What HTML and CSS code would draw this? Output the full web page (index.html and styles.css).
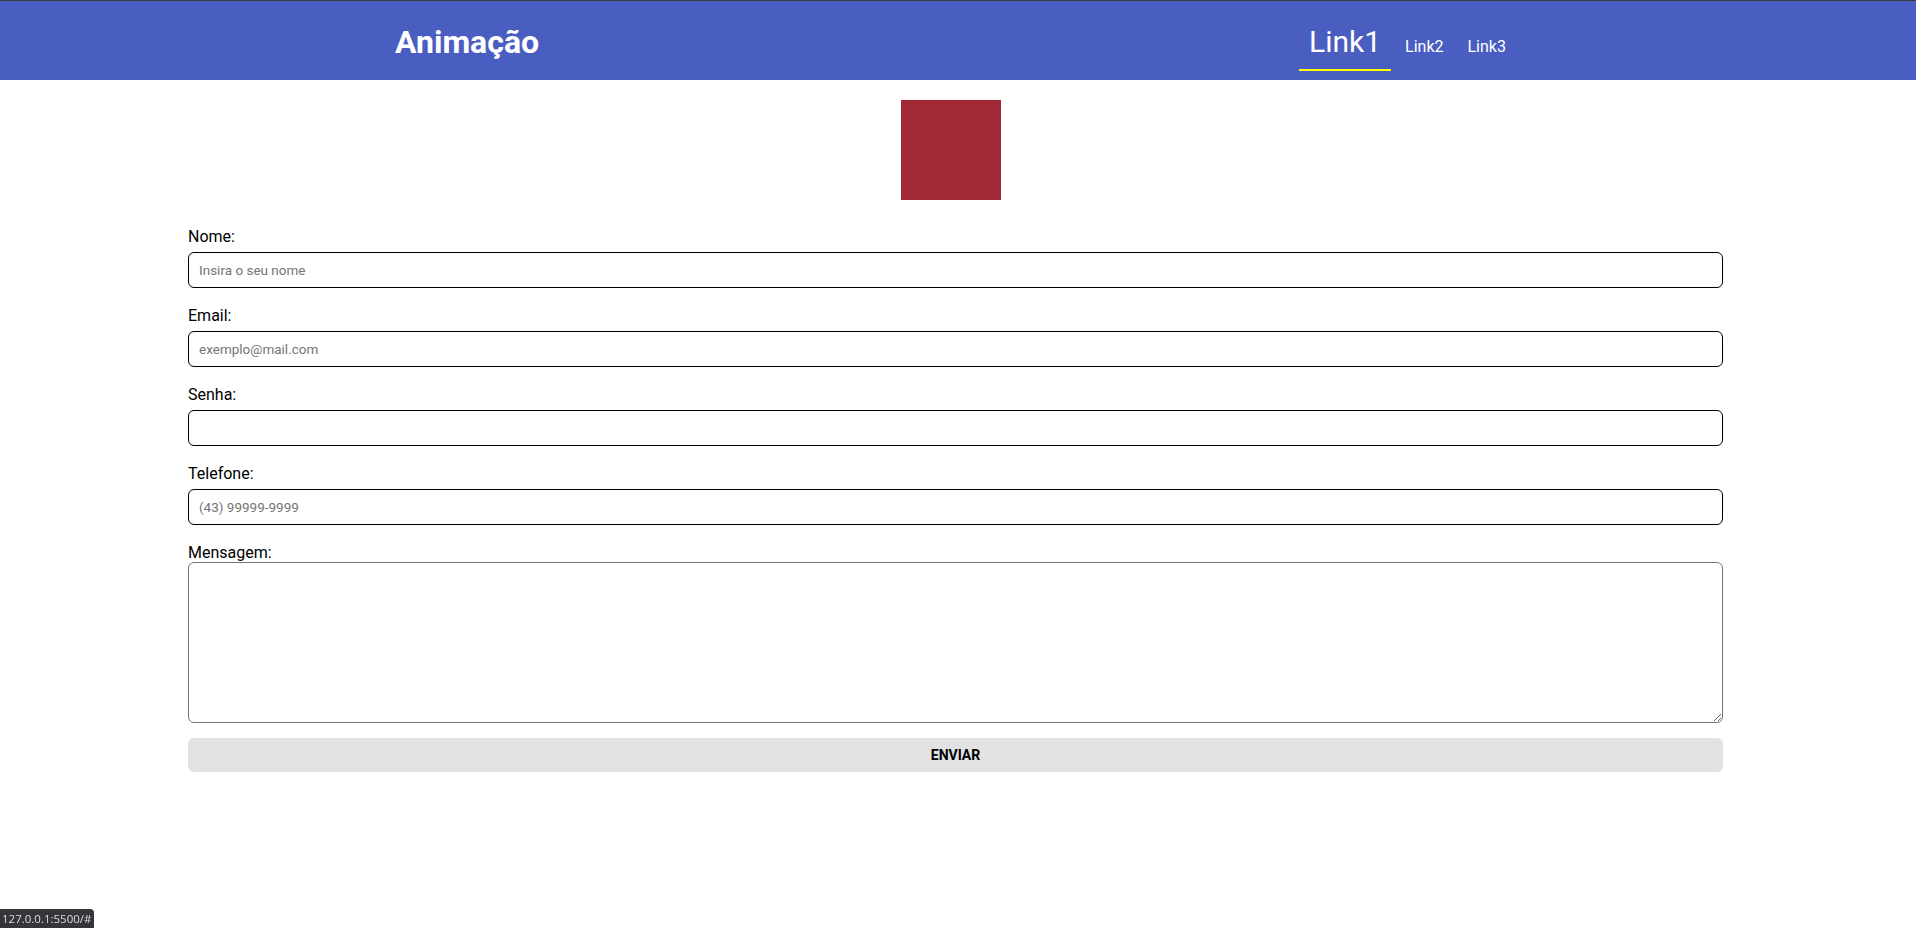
FILE: index.html
```html
<!DOCTYPE html>
<html lang="pt-BR">
<head>
<meta charset="utf-8">
<title>Animação</title>
<link rel="stylesheet" href="styles.css">
</head>
<body>
<header class="topbar">
  <h1 class="brand">Animação</h1>
  <nav class="nav"><a class="nav-link nav-link-active" href="#">Link1</a> <a class="nav-link" href="#">Link2</a> <a class="nav-link" href="#">Link3</a></nav>
</header>
<main class="page">
  <div class="box"></div>
  <form class="form">
    <label class="field-label" for="nome">Nome:</label>
    <input class="field-input" id="nome" type="text" placeholder="Insira o seu nome">
    <label class="field-label" for="email">Email:</label>
    <input class="field-input" id="email" type="email" placeholder="exemplo@mail.com">
    <label class="field-label" for="senha">Senha:</label>
    <input class="field-input" id="senha" type="password">
    <label class="field-label" for="tel">Telefone:</label>
    <input class="field-input" id="tel" type="tel" placeholder="(43) 99999-9999">
    <label class="field-label field-label-tight" for="msg">Mensagem:</label>
    <textarea class="field-textarea" id="msg"></textarea>
    <button class="submit" type="button">ENVIAR</button>
  </form>
</main>
<div class="status-url">127.0.0.1:5500/#</div>
</body>
</html>
```
FILE: styles.css
```css
* { box-sizing: border-box; }

html, body {
  margin: 0;
  padding: 0;
  background: #ffffff;
  font-family: Roboto, "Liberation Sans", Arial, sans-serif;
  color: #000;
}

.topbar {
  height: 80px;
  border-top: 1px solid #3a3a3a;
  background: #4a5ec1;
  display: grid;
  grid-template-columns: 1299px auto;
  align-items: center;
}

.brand {
  margin: 3px 0 0;
  padding-left: 395px;
  font-size: 32px;
  font-weight: 700;
  color: #fff;
  line-height: normal;
}

.nav {
  margin-top: 4px;
  white-space: nowrap;
  font-size: 16px;
}

.nav-link {
  display: inline-block;
  padding: 10px;
  color: #fff;
  text-decoration: none;
  font-size: 16px;
  line-height: normal;
}

.nav-link-active {
  font-size: 30px;
  border-bottom: 2px solid #ffff00;
}

.page {
  display: block;
}

.box {
  width: 100px;
  height: 100px;
  margin: 20px 0 0 901px;
  background: #a12834;
}

.form {
  width: 1535px;
  margin: 27px 0 0 188px;
  display: flex;
  flex-direction: column;
}

.field-label {
  display: block;
  font-size: 16px;
  line-height: 19px;
  color: #000;
}

.field-input {
  display: block;
  width: 100%;
  height: 36px;
  margin: 6px 0 18px;
  padding: 0 10px;
  border: 1px solid #000;
  border-radius: 6px;
  font-family: Roboto, "Liberation Sans", Arial, sans-serif;
  font-size: 13.5px;
  background: #fff;
  outline: none;
}

.field-input::placeholder {
  color: #757575;
}

.field-textarea {
  display: block;
  width: 100%;
  height: 161px;
  margin: 0 0 15px;
  border: 1px solid #767676;
  border-radius: 6px;
  font-family: Roboto, "Liberation Sans", Arial, sans-serif;
  font-size: 13.333px;
  background: #fff;
  resize: vertical;
}

.submit {
  display: block;
  width: 100%;
  height: 34px;
  border: none;
  border-radius: 6px;
  background: #e2e2e2;
  font-family: Roboto, "Liberation Sans", Arial, sans-serif;
  font-size: 14px;
  font-weight: 700;
  color: #000;
}

.status-url {
  position: fixed;
  left: 0;
  bottom: 0;
  height: 19px;
  padding: 0 3px 0 2px;
  background: #35363a;
  border-top-right-radius: 4px;
  color: #dcdcdc;
  font-family: "Open Sans", "DejaVu Sans", sans-serif;
  font-size: 11.5px;
  line-height: 19px;
}
```
